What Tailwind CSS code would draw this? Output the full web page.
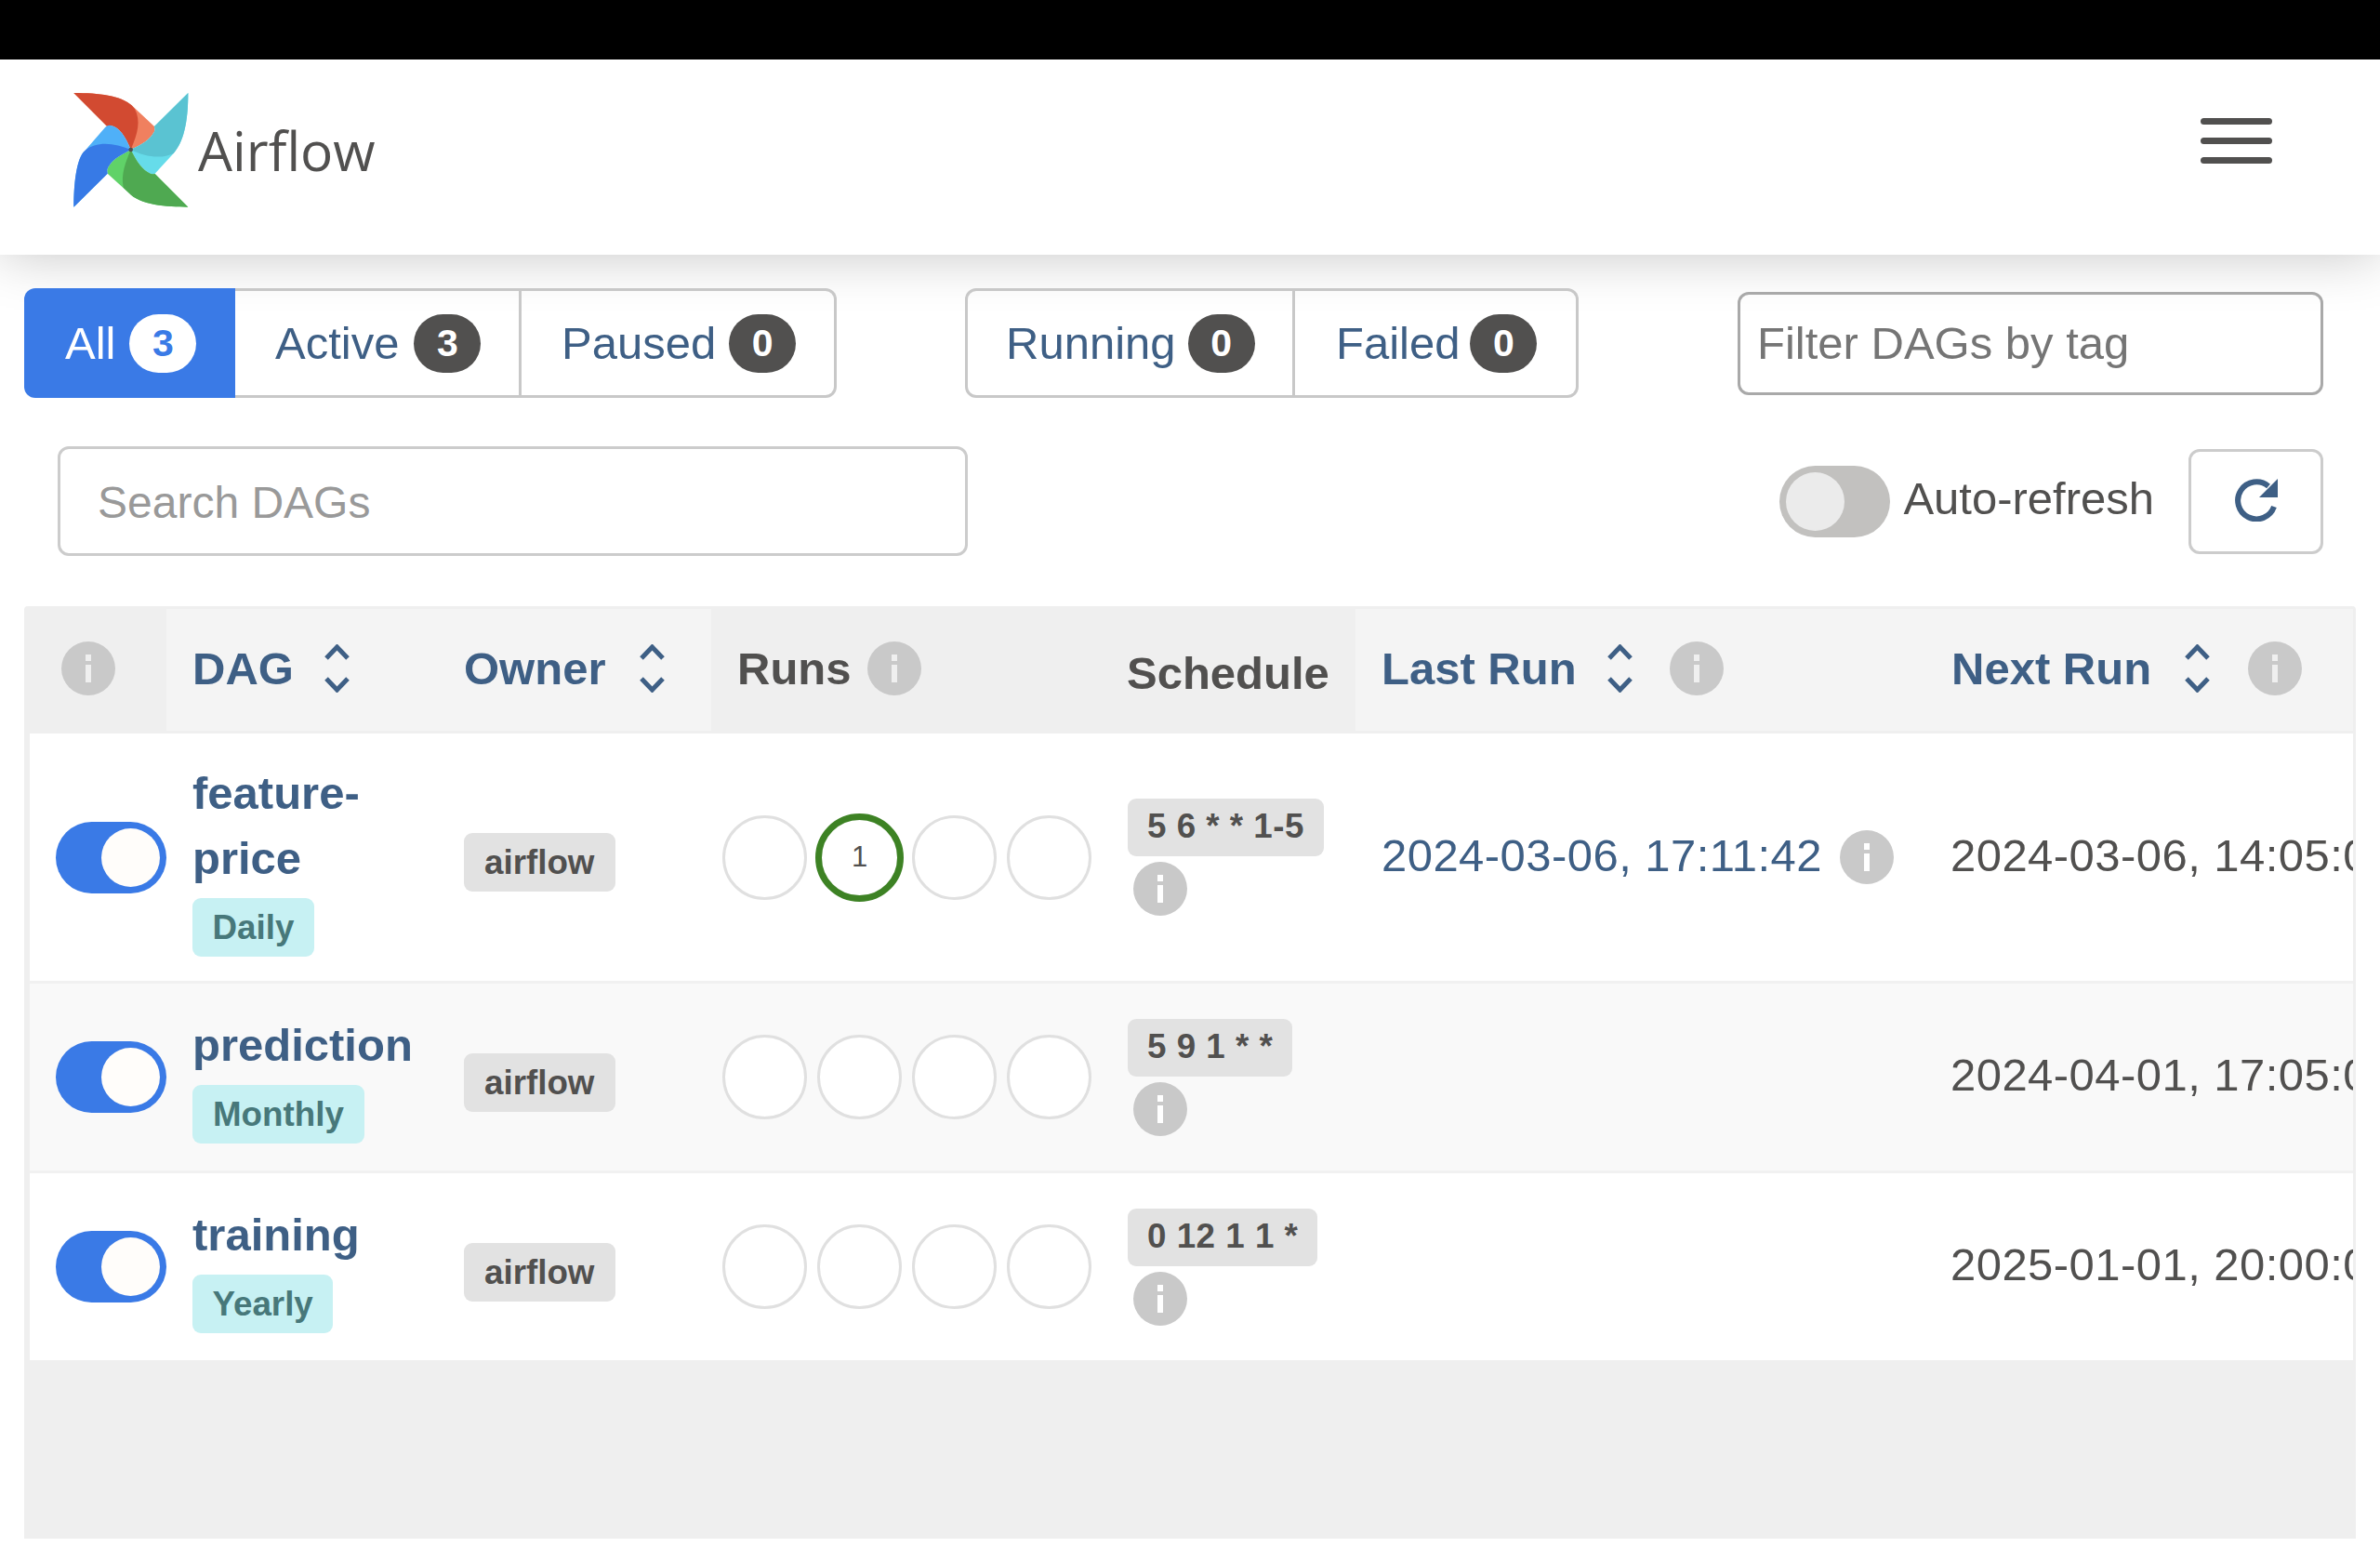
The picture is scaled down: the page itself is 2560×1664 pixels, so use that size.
<!DOCTYPE html>
<html lang="en">
<head>
  <meta charset="UTF-8">
  <meta name="viewport" content="width=device-width, initial-scale=1.0">
  <script src="https://cdn.jsdelivr.net/npm/@tailwindcss/browser@4"></script>
  <title>Airflow - DAGs</title>
</head>
<body class="bg-white h-[1664px] overflow-hidden font-['Liberation_Sans',Arial,sans-serif] text-[49px] leading-[70px] text-[#51504f]">

  <div class="h-[64px] bg-black relative z-10"></div>

  <!-- Navbar -->
  <nav class="h-[210px] bg-white flex justify-between items-start pl-[70px] pr-[116px] shadow-[0_0_56px_rgba(0,0,0,0.23)]">
    <div class="flex items-start pt-[26px]">
      <svg class="w-[150px] h-[145px]" viewBox="0 0 450 435">
        <path fill="#f0805f" d="M28 30C110 30 180 38 215 70L288 138Q293 150 285 160C270 185 245 198 212 213C195 170 175 140 148 135L135 137Z"/>
        <path fill="#d24a31" d="M28 30C110 30 180 38 215 70L225 82C245 120 235 160 212 213C195 170 175 140 148 135L135 137Z"/>
        <path fill="#66dcea" d="M397 30C397 100 390 180 350 225L290 290Q285 293 275 290C250 280 230 250 212 213C245 198 270 185 285 160Q293 150 288 138Z"/>
        <path fill="#5ac3d2" d="M397 30C397 100 390 180 350 225C310 245 255 235 212 213C245 198 270 185 285 160Q293 150 288 138Z"/>
        <path fill="#60d268" d="M397 398C330 398 240 392 205 352L137 290Q132 275 145 260C160 240 180 230 212 213C230 250 250 280 275 290Q285 293 290 291Z"/>
        <path fill="#4fa951" d="M397 398C330 398 240 392 205 352L188 335C180 290 195 255 212 213C230 250 250 280 275 290Q285 293 290 291Z"/>
        <path fill="#4fb0f8" d="M28 398C28 330 35 240 65 215L130 140Q140 132 148 135C175 140 195 170 212 213C180 230 160 240 145 260Q132 275 137 290Z"/>
        <path fill="#377ae6" d="M28 398C28 330 35 240 65 215C100 185 160 190 212 213C180 230 160 240 145 260Q132 275 137 290Z"/>
        <circle cx="212" cy="213" r="7" fill="#51504f"/>
      </svg>
      <span class="font-['Open_Sans',sans-serif] text-[58.500px] leading-[82px] -ml-[7px] mt-[30px]">Airflow</span>
    </div>
    <button type="button" class="flex flex-col gap-[14px] w-[77px] mt-[63px]">
      <span class="h-[7px] rounded-full bg-[#51504f]"></span>
      <span class="h-[7px] rounded-full bg-[#51504f]"></span>
      <span class="h-[7px] rounded-full bg-[#51504f]"></span>
    </button>
  </nav>

  <!-- Status filters -->
  <div class="flex items-center mt-[36px] ml-[26px] h-[118px]">
    <div class="flex h-full">
      <a class="w-[227px] flex items-center gap-[15px] pl-[44px] bg-[#3a7ae6] text-white rounded-l-[12px]">All
        <span class="w-[72px] h-[63px] rounded-full bg-white text-[#3a7ae6] font-bold text-[41px] leading-[63px] text-center">3</span>
      </a>
      <a class="w-[308px] flex items-center gap-[16px] pl-[43px] border-y-[3px] border-r-[3px] border-[#c8c8c8] text-[#3e5f85]">Active
        <span class="w-[72px] h-[63px] rounded-full bg-[#51504f] text-white font-bold text-[41px] leading-[63px] text-center">3</span>
      </a>
      <a class="w-[339px] flex items-center gap-[14px] pl-[43px] border-y-[3px] border-r-[3px] border-[#c8c8c8] rounded-r-[12px] text-[#3e5f85]">Paused
        <span class="w-[72px] h-[63px] rounded-full bg-[#51504f] text-white font-bold text-[41px] leading-[63px] text-center">0</span>
      </a>
    </div>
    <div class="flex h-full ml-[138px]">
      <a class="w-[355px] flex items-center gap-[13px] pl-[41px] border-y-[3px] border-x-[3px] border-[#c8c8c8] rounded-l-[12px] text-[#3e5f85]">Running
        <span class="w-[72px] h-[63px] rounded-full bg-[#51504f] text-white font-bold text-[41px] leading-[63px] text-center">0</span>
      </a>
      <a class="w-[305px] flex items-center gap-[11px] pl-[44px] border-y-[3px] border-r-[3px] border-[#c8c8c8] rounded-r-[12px] text-[#3e5f85]">Failed
        <span class="w-[72px] h-[63px] rounded-full bg-[#51504f] text-white font-bold text-[41px] leading-[63px] text-center">0</span>
      </a>
    </div>
    <input type="text" placeholder="Filter DAGs by tag" class="ml-[171px] w-[630px] h-[111px] border-[3px] border-[#a9a9a9] rounded-[12px] pl-[18px] placeholder:text-[#757575] outline-none">
  </div>

  <!-- Search + auto refresh -->
  <div class="flex justify-between items-center mt-[52px] ml-[62px] mr-[61px] h-[118px]">
    <input type="text" placeholder="Search DAGs" class="w-[979px] h-[118px] border-[3px] border-[#cccccc] rounded-[12px] pl-[40px] pt-[2px] text-[48px] placeholder:text-[#999999] outline-none">
    <div class="flex items-center">
      <span class="w-[119px] h-[77px] rounded-full bg-[#c2c1bf] flex items-center pl-[7px]">
        <span class="w-[63px] h-[63px] rounded-full bg-[#ebebeb]"></span>
      </span>
      <span class="ml-[14px] mr-[37px] -mt-[7px]">Auto-refresh</span>
      <button type="button" class="w-[145px] h-[113px] border-[3px] border-[#cccccc] rounded-[12px] flex items-center justify-center">
        <svg class="w-[46px] h-[47px] -mt-[3px]" viewBox="0 0 46 47" fill="none">
          <path d="M42 31A20 20 0 1 1 36 9" stroke="#3e5f85" stroke-width="6"/>
          <path d="M46 1V21H26Z" fill="#3e5f85"/>
        </svg>
      </button>
    </div>
  </div>

  <!-- DAG table -->
  <div class="mt-[54px] ml-[26px] w-[2508px] h-[1003px] bg-[#efefef] rounded-t-[4px] overflow-hidden pt-[3px] pl-[6px] pr-[3px]">
    <table class="table-fixed w-[2499px] border-separate border-spacing-0">
      <colgroup>
        <col class="w-[147px]"><col class="w-[292px]"><col class="w-[294px]"><col class="w-[419px]"><col class="w-[274px]"><col class="w-[612px]"><col class="w-[461px]">
      </colgroup>
      <thead>
        <tr class="h-[134px]">
          <th class="border-b-[3px] border-[#efefef] pl-[34px] pb-[3px] text-left">
            <svg class="w-[58px] h-[58px]" viewBox="0 0 58 58"><circle cx="29" cy="29" r="29" fill="#c9c9c9"/><rect x="26" y="14" width="6" height="7" fill="#efefef"/><rect x="26" y="25" width="6" height="19" fill="#efefef"/></svg>
          </th>
          <th class="bg-[#f4f4f4] border-b-[3px] border-[#efefef] pl-[28px] text-left pb-[3px] font-bold text-[#3e5f85]">
            <div class="flex items-center gap-[33px]">DAG
              <svg class="w-[27px] h-[52px]" viewBox="0 0 27 52" fill="none" stroke="#3e5f85" stroke-width="5"><path d="M2 15L13.500 3L25 15"/><path d="M2 37L13.500 49L25 37"/></svg>
            </div>
          </th>
          <th class="bg-[#f4f4f4] border-b-[3px] border-[#efefef] pl-[28px] text-left pb-[3px] font-bold text-[#3e5f85]">
            <div class="flex items-center gap-[36.500px]">Owner
              <svg class="w-[27px] h-[52px]" viewBox="0 0 27 52" fill="none" stroke="#3e5f85" stroke-width="5"><path d="M2 15L13.500 3L25 15"/><path d="M2 37L13.500 49L25 37"/></svg>
            </div>
          </th>
          <th class="border-b-[3px] border-[#efefef] pl-[28px] text-left pb-[3px] font-bold">
            <div class="flex items-center gap-[17px]">Runs
              <svg class="w-[58px] h-[58px]" viewBox="0 0 58 58"><circle cx="29" cy="29" r="29" fill="#c9c9c9"/><rect x="26" y="14" width="6" height="7" fill="#efefef"/><rect x="26" y="25" width="6" height="19" fill="#efefef"/></svg>
            </div>
          </th>
          <th class="border-b-[3px] border-[#efefef] pl-[28px] text-left pt-[6px] font-bold">Schedule</th>
          <th class="bg-[#f4f4f4] border-b-[3px] border-[#efefef] pl-[28px] text-left pb-[3px] font-bold text-[#3e5f85]">
            <div class="flex items-center">Last Run
              <svg class="ml-[33px] w-[27px] h-[52px]" viewBox="0 0 27 52" fill="none" stroke="#3e5f85" stroke-width="5"><path d="M2 15L13.500 3L25 15"/><path d="M2 37L13.500 49L25 37"/></svg>
              <svg class="ml-[40px] w-[58px] h-[58px]" viewBox="0 0 58 58"><circle cx="29" cy="29" r="29" fill="#c9c9c9"/><rect x="26" y="14" width="6" height="7" fill="#efefef"/><rect x="26" y="25" width="6" height="19" fill="#efefef"/></svg>
            </div>
          </th>
          <th class="bg-[#f4f4f4] border-b-[3px] border-[#efefef] pl-[29px] text-left pb-[3px] font-bold text-[#3e5f85]">
            <div class="flex items-center">Next Run
              <svg class="ml-[35.500px] w-[27px] h-[52px]" viewBox="0 0 27 52" fill="none" stroke="#3e5f85" stroke-width="5"><path d="M2 15L13.500 3L25 15"/><path d="M2 37L13.500 49L25 37"/></svg>
              <svg class="ml-[41px] w-[58px] h-[58px]" viewBox="0 0 58 58"><circle cx="29" cy="29" r="29" fill="#c9c9c9"/><rect x="26" y="14" width="6" height="7" fill="#efefef"/><rect x="26" y="25" width="6" height="19" fill="#efefef"/></svg>
            </div>
          </th>
        </tr>
      </thead>
      <tbody>
        <!-- feature-price -->
        <tr class="h-[269px] bg-white">
          <td class="border-b-[3px] border-[#f1f1f1] pl-[28px]">
            <span class="w-[119px] h-[77px] rounded-full bg-[#3a7ae6] flex items-center justify-end pr-[7px]"><span class="w-[63px] h-[63px] rounded-full bg-[#fffdfa]"></span></span>
          </td>
          <td class="border-b-[3px] border-[#f1f1f1] pl-[28px]">
            <a class="block pt-[2px] font-bold text-[#3e5f85]">feature-price</a>
            <span class="inline-block mt-[7px] px-[21.500px] h-[63px] leading-[63px] rounded-[9px] bg-[#c7f1f3] text-[#47787a] font-bold text-[36.750px]">Daily</span>
          </td>
          <td class="border-b-[3px] border-[#f1f1f1] pl-[28px]">
            <span class="inline-block mt-[11px] pl-[22px] pr-[23px] h-[63px] leading-[63px] rounded-[9px] bg-[#e2e2e2] font-bold text-[36.750px]">airflow</span>
          </td>
          <td class="border-b-[3px] border-[#f1f1f1] pl-[12px]">
            <div class="flex items-center gap-[11px]">
              <span class="w-[91px] h-[91px] rounded-full bg-white border-[3.500px] border-[#e0e0e0]"></span>
              <span class="w-[95px] h-[95px] -mx-[2px] rounded-full bg-white border-[7px] border-[#3d8224] flex items-center justify-center text-[31px]">1</span>
              <span class="w-[91px] h-[91px] rounded-full bg-white border-[3.500px] border-[#e0e0e0]"></span>
              <span class="w-[91px] h-[91px] rounded-full bg-white border-[3.500px] border-[#e0e0e0]"></span>
            </div>
          </td>
          <td class="border-b-[3px] border-[#f1f1f1] pl-[29px]">
            <span class="block w-fit px-[21px] h-[62px] leading-[60px] tracking-[0.500px] rounded-[9px] bg-[#e2e2e2] font-bold text-[36.750px]">5 6 * * 1-5</span>
            <svg class="block mt-[6px] ml-[6px] w-[58px] h-[58px]" viewBox="0 0 58 58"><circle cx="29" cy="29" r="29" fill="#c9c9c9"/><rect x="26" y="14" width="6" height="7" fill="#fff"/><rect x="26" y="25" width="6" height="19" fill="#fff"/></svg>
          </td>
          <td class="border-b-[3px] border-[#f1f1f1] pl-[28px]">
            <div class="flex items-center gap-[19px]">
              <a class="-mt-[5px] text-[#3e5f85] tracking-[0.450px] whitespace-nowrap">2024-03-06, 17:11:42</a>
              <svg class="w-[58px] h-[58px]" viewBox="0 0 58 58"><circle cx="29" cy="29" r="29" fill="#c9c9c9"/><rect x="26" y="14" width="6" height="7" fill="#fff"/><rect x="26" y="25" width="6" height="19" fill="#fff"/></svg>
            </div>
          </td>
          <td class="border-b-[3px] border-[#f1f1f1] pl-[28px] pb-[5px] tracking-[0.450px] overflow-hidden whitespace-nowrap">2024-03-06, 14:05:00</td>
        </tr>
        <!-- prediction -->
        <tr class="h-[204px] bg-[#f9f9f9]">
          <td class="border-b-[3px] border-[#f1f1f1] pl-[28px]">
            <span class="w-[119px] h-[77px] rounded-full bg-[#3a7ae6] flex items-center justify-end pr-[7px]"><span class="w-[63px] h-[63px] rounded-full bg-[#fffdfa]"></span></span>
          </td>
          <td class="border-b-[3px] border-[#f1f1f1] pl-[28px]">
            <a class="block pt-[2px] font-bold text-[#3e5f85]">prediction</a>
            <span class="inline-block mt-[7px] px-[22px] h-[63px] leading-[63px] rounded-[9px] bg-[#c7f1f3] text-[#47787a] font-bold text-[36.750px]">Monthly</span>
          </td>
          <td class="border-b-[3px] border-[#f1f1f1] pl-[28px]">
            <span class="inline-block mt-[11px] pl-[22px] pr-[23px] h-[63px] leading-[63px] rounded-[9px] bg-[#e2e2e2] font-bold text-[36.750px]">airflow</span>
          </td>
          <td class="border-b-[3px] border-[#f1f1f1] pl-[12px]">
            <div class="flex items-center gap-[11px]">
              <span class="w-[91px] h-[91px] rounded-full bg-white border-[3.500px] border-[#e0e0e0]"></span>
              <span class="w-[91px] h-[91px] rounded-full bg-white border-[3.500px] border-[#e0e0e0]"></span>
              <span class="w-[91px] h-[91px] rounded-full bg-white border-[3.500px] border-[#e0e0e0]"></span>
              <span class="w-[91px] h-[91px] rounded-full bg-white border-[3.500px] border-[#e0e0e0]"></span>
            </div>
          </td>
          <td class="border-b-[3px] border-[#f1f1f1] pl-[29px]">
            <span class="block w-fit px-[21px] h-[62px] leading-[60px] tracking-[0.500px] rounded-[9px] bg-[#e2e2e2] font-bold text-[36.750px]">5 9 1 * *</span>
            <svg class="block mt-[6px] ml-[6px] w-[58px] h-[58px]" viewBox="0 0 58 58"><circle cx="29" cy="29" r="29" fill="#c9c9c9"/><rect x="26" y="14" width="6" height="7" fill="#fff"/><rect x="26" y="25" width="6" height="19" fill="#fff"/></svg>
          </td>
          <td class="border-b-[3px] border-[#f1f1f1]"></td>
          <td class="border-b-[3px] border-[#f1f1f1] pl-[28px] pb-[5px] tracking-[0.450px] overflow-hidden whitespace-nowrap">2024-04-01, 17:05:00</td>
        </tr>
        <!-- training -->
        <tr class="h-[201px] bg-white">
          <td class="pl-[28px]">
            <span class="w-[119px] h-[77px] rounded-full bg-[#3a7ae6] flex items-center justify-end pr-[7px]"><span class="w-[63px] h-[63px] rounded-full bg-[#fffdfa]"></span></span>
          </td>
          <td class="pl-[28px]">
            <a class="block pt-[2px] font-bold text-[#3e5f85]">training</a>
            <span class="inline-block mt-[7px] px-[21.500px] h-[63px] leading-[63px] rounded-[9px] bg-[#c7f1f3] text-[#47787a] font-bold text-[36.750px]">Yearly</span>
          </td>
          <td class="pl-[28px]">
            <span class="inline-block mt-[11px] pl-[22px] pr-[23px] h-[63px] leading-[63px] rounded-[9px] bg-[#e2e2e2] font-bold text-[36.750px]">airflow</span>
          </td>
          <td class="pl-[12px]">
            <div class="flex items-center gap-[11px]">
              <span class="w-[91px] h-[91px] rounded-full bg-white border-[3.500px] border-[#e0e0e0]"></span>
              <span class="w-[91px] h-[91px] rounded-full bg-white border-[3.500px] border-[#e0e0e0]"></span>
              <span class="w-[91px] h-[91px] rounded-full bg-white border-[3.500px] border-[#e0e0e0]"></span>
              <span class="w-[91px] h-[91px] rounded-full bg-white border-[3.500px] border-[#e0e0e0]"></span>
            </div>
          </td>
          <td class="pl-[29px]">
            <span class="block w-fit px-[21px] h-[62px] leading-[60px] tracking-[0.500px] rounded-[9px] bg-[#e2e2e2] font-bold text-[36.750px]">0 12 1 1 *</span>
            <svg class="block mt-[6px] ml-[6px] w-[58px] h-[58px]" viewBox="0 0 58 58"><circle cx="29" cy="29" r="29" fill="#c9c9c9"/><rect x="26" y="14" width="6" height="7" fill="#fff"/><rect x="26" y="25" width="6" height="19" fill="#fff"/></svg>
          </td>
          <td></td>
          <td class="pl-[28px] pb-[5px] tracking-[0.450px] overflow-hidden whitespace-nowrap">2025-01-01, 20:00:00</td>
        </tr>
      </tbody>
    </table>
  </div>

</body>
</html>
